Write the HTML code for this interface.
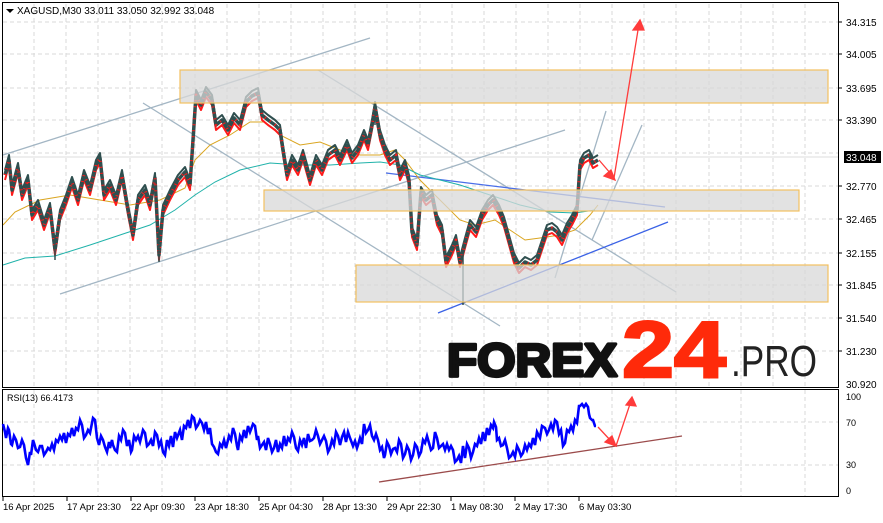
<!DOCTYPE html>
<html><head><meta charset="utf-8"><style>
html,body{margin:0;padding:0;background:#fff;}
body{width:883px;height:518px;overflow:hidden;font-family:"Liberation Sans",sans-serif;}
svg text{font-family:"Liberation Sans",sans-serif;}
</style></head><body>
<svg width="883" height="518" viewBox="0 0 883 518" xmlns="http://www.w3.org/2000/svg">
<defs>
<polyline id="pp" fill="none" stroke-linejoin="round" points="5,175 9,160 12,190 18,168 22,195 28,180 32,215 38,205 44,225 50,208 55,250 60,215 66,200 72,182 78,200 84,175 90,190 96,165 100,158 104,195 110,185 116,200 122,175 128,210 133,235 138,200 145,190 150,205 155,178 159,255 163,210 170,195 178,180 185,172 190,185 193,140 196,95 201,105 206,92 212,100 216,125 222,120 228,130 234,118 240,125 246,102 252,96 258,93 262,115 268,120 275,125 280,130 283,150 287,175 292,160 298,170 303,155 310,180 316,160 322,170 328,155 335,150 340,160 347,145 352,158 358,150 364,135 368,145 372,125 375,107 380,135 385,150 390,160 396,155 400,175 405,165 409,180 412,232 417,245 421,192 426,200 432,195 437,220 442,230 446,262 452,250 456,240 460,262 465,243 470,225 476,232 482,215 488,205 493,200 499,210 504,222 509,240 514,258 519,268 525,262 531,265 537,260 542,245 547,230 552,228 557,232 562,240 567,228 572,220 577,210 580,165 584,158 589,155 593,163 598,160"/>
</defs>
<rect width="883" height="518" fill="#fff"/>
<g stroke="#d8d8d8" stroke-dasharray="4 3" stroke-width="1">
<line x1="34" y1="4" x2="34" y2="386"/><line x1="66" y1="4" x2="66" y2="386"/><line x1="98" y1="4" x2="98" y2="386"/><line x1="130" y1="4" x2="130" y2="386"/><line x1="162" y1="4" x2="162" y2="386"/><line x1="195" y1="4" x2="195" y2="386"/><line x1="227" y1="4" x2="227" y2="386"/><line x1="259" y1="4" x2="259" y2="386"/><line x1="291" y1="4" x2="291" y2="386"/><line x1="323" y1="4" x2="323" y2="386"/><line x1="355" y1="4" x2="355" y2="386"/><line x1="387" y1="4" x2="387" y2="386"/><line x1="420" y1="4" x2="420" y2="386"/><line x1="452" y1="4" x2="452" y2="386"/><line x1="484" y1="4" x2="484" y2="386"/><line x1="516" y1="4" x2="516" y2="386"/><line x1="548" y1="4" x2="548" y2="386"/><line x1="580" y1="4" x2="580" y2="386"/><line x1="612" y1="4" x2="612" y2="386"/><line x1="644" y1="4" x2="644" y2="386"/><line x1="676" y1="4" x2="676" y2="386"/><line x1="709" y1="4" x2="709" y2="386"/><line x1="741" y1="4" x2="741" y2="386"/><line x1="773" y1="4" x2="773" y2="386"/><line x1="805" y1="4" x2="805" y2="386"/>
<line x1="3" y1="22" x2="838" y2="22"/><line x1="3" y1="54" x2="838" y2="54"/><line x1="3" y1="88" x2="838" y2="88"/><line x1="3" y1="120" x2="838" y2="120"/><line x1="3" y1="153" x2="838" y2="153"/><line x1="3" y1="186" x2="838" y2="186"/><line x1="3" y1="219" x2="838" y2="219"/><line x1="3" y1="253" x2="838" y2="253"/><line x1="3" y1="285" x2="838" y2="285"/><line x1="3" y1="318" x2="838" y2="318"/><line x1="3" y1="351" x2="838" y2="351"/>
</g>
<line x1="3" y1="157" x2="838" y2="157" stroke="#ddd"/>
<g stroke="#a3b6c4" stroke-width="1.3" fill="none">
<line x1="3" y1="155" x2="370" y2="38"/>
<line x1="60" y1="294" x2="565" y2="130"/>
<line x1="143" y1="103" x2="500" y2="326"/>
<line x1="318" y1="70" x2="676" y2="292"/>
<line x1="555" y1="278" x2="606" y2="111"/>
<line x1="592" y1="240" x2="642" y2="125"/>
</g>
<line x1="386" y1="173" x2="665" y2="207" stroke="#4a6ee8" stroke-width="1.3"/>
<line x1="438" y1="313" x2="668" y2="222" stroke="#3a62e6" stroke-width="1.3"/>
<polyline fill="none" stroke="#daa520" stroke-width="1" points="3,225 15,212 40,200 70,195 100,200 130,205 160,200 185,188 195,160 210,145 230,135 250,122 265,122 280,135 300,145 320,142 340,150 360,155 380,155 395,150 405,160 420,180 440,200 460,220 475,225 495,220 510,230 525,240 540,238 560,235 575,230 590,215 598,205"/>
<polyline fill="none" stroke="#20b2aa" stroke-width="1" points="3,265 25,258 55,256 90,245 120,235 150,225 175,210 195,195 215,182 240,170 270,163 300,165 330,165 360,163 380,162 400,165 420,175 440,180 460,185 490,195 520,205 550,212 575,213 595,210"/>
<!-- price candles approx -->
<use href="#pp" stroke="#2f4f4f" stroke-width="2" transform="translate(0,-5)"/>
<use href="#pp" stroke="#ff1a1a" stroke-width="2" transform="translate(0,5)"/>
<use href="#pp" stroke="#2f4f4f" stroke-width="3.5"/>
<use href="#pp" stroke="#ff1a1a" stroke-width="3" stroke-dasharray="1 5"/>
<g stroke="#2f4f4f" stroke-width="1.5">
<line x1="463" y1="255" x2="463" y2="305"/><line x1="159" y1="230" x2="159" y2="262"/><line x1="55" y1="235" x2="55" y2="260"/><line x1="375" y1="105" x2="375" y2="125"/>
</g>
<g fill="#d8d8d8" fill-opacity="0.75" stroke="#f2c060" stroke-width="1.2">
<rect x="180" y="70" width="648" height="33"/>
<rect x="264" y="190" width="535" height="21"/>
<rect x="356" y="265" width="472" height="37"/>
</g>
<g stroke="#ff3b3b" stroke-width="1.3" fill="#ff3b3b">
<line x1="599" y1="160" x2="611" y2="174"/><polygon points="615,180 604,176 611,170"/>
<line x1="614" y1="178" x2="638" y2="30"/><polygon points="640,20 633,30 644,30"/>
</g>
<text x="447" y="376" font-size="46" font-weight="900" fill="#111" stroke="#111" stroke-width="3.2" stroke-linejoin="round" textLength="170" lengthAdjust="spacingAndGlyphs">FOREX</text>
<text x="622" y="377" font-size="80" font-weight="bold" fill="#ff2a0a" stroke="#ff2a0a" stroke-width="2.5" textLength="104" lengthAdjust="spacingAndGlyphs">24</text>
<text x="731" y="376" font-size="44" fill="#222" textLength="86" lengthAdjust="spacingAndGlyphs">.PRO</text>
<polygon points="6,9 14,9 10,13" fill="#000"/>
<text x="17" y="14" font-size="10" fill="#000">XAGUSD,M30  33.011 33.050 32.992 33.048</text>
<rect x="2.5" y="2.5" width="836" height="385" fill="none" stroke="#000"/>
<rect x="2.5" y="389.5" width="836" height="107" fill="none" stroke="#000"/>
<g font-size="10" fill="#000">
<text x="846" y="26">34.315</text><text x="846" y="58">34.005</text><text x="846" y="92">33.695</text><text x="846" y="124">33.390</text><text x="846" y="190">32.770</text><text x="846" y="223">32.465</text><text x="846" y="257">32.155</text><text x="846" y="289">31.845</text><text x="846" y="322">31.540</text><text x="846" y="355">31.230</text><text x="846" y="388">30.920</text>
</g>
<g stroke="#000"><line x1="838" y1="22" x2="842" y2="22"/><line x1="838" y1="54" x2="842" y2="54"/><line x1="838" y1="88" x2="842" y2="88"/><line x1="838" y1="120" x2="842" y2="120"/><line x1="838" y1="186" x2="842" y2="186"/><line x1="838" y1="219" x2="842" y2="219"/><line x1="838" y1="253" x2="842" y2="253"/><line x1="838" y1="285" x2="842" y2="285"/><line x1="838" y1="318" x2="842" y2="318"/><line x1="838" y1="351" x2="842" y2="351"/></g>
<rect x="844" y="151" width="37" height="12" fill="#000"/>
<text x="846" y="161" font-size="10" fill="#fff">33.048</text>
<g stroke="#d8d8d8" stroke-dasharray="4 3">
<line x1="3" y1="422" x2="838" y2="422"/><line x1="3" y1="465" x2="838" y2="465"/>
<line x1="34" y1="390" x2="34" y2="496"/><line x1="98" y1="390" x2="98" y2="496"/><line x1="162" y1="390" x2="162" y2="496"/><line x1="227" y1="390" x2="227" y2="496"/><line x1="291" y1="390" x2="291" y2="496"/><line x1="355" y1="390" x2="355" y2="496"/><line x1="420" y1="390" x2="420" y2="496"/><line x1="484" y1="390" x2="484" y2="496"/><line x1="548" y1="390" x2="548" y2="496"/><line x1="612" y1="390" x2="612" y2="496"/><line x1="676" y1="390" x2="676" y2="496"/><line x1="741" y1="390" x2="741" y2="496"/><line x1="805" y1="390" x2="805" y2="496"/>
</g>
<text x="7" y="401" font-size="9" fill="#000">RSI(13) 66.4173</text>
<line x1="379" y1="482" x2="682" y2="436" stroke="#9b4b4b" stroke-width="1.3"/>
<polyline fill="none" stroke="#0000ff" stroke-width="2.6" stroke-linejoin="miter" points="3,424 5,432 6,438 8,428 9,430 11,444 12,445 14,436 16,440 18,448 20,447 22,440 24,445 26,458 28,465 30,452 31,455 33,440 34,443 36,450 38,452 40,446 42,446 44,455 46,452 48,448 50,450 52,444 54,450 56,440 58,442 60,436 62,440 64,433 66,443 68,434 70,436 72,428 74,436 76,428 78,430 80,420 82,425 84,438 86,435 88,430 90,433 93,418 95,420 97,438 99,445 101,436 103,440 105,447 107,452 109,442 110,448 112,440 113,445 115,450 117,452 119,436 121,440 123,430 125,433 127,446 129,440 131,452 132,450 134,436 136,440 138,436 140,442 143,430 145,433 147,446 149,444 151,440 153,446 155,432 157,435 159,446 161,441 163,452 165,455 167,440 169,446 171,436 173,447 175,432 177,438 180,430 182,440 184,426 186,428 188,420 190,428 192,416 194,418 196,428 198,425 200,420 202,423 204,430 206,422 208,434 210,428 212,444 214,447 216,452 218,454 220,444 222,447 224,440 226,448 229,436 231,440 233,428 235,434 237,446 238,450 240,436 242,440 244,430 246,438 248,426 250,432 253,424 255,426 257,440 258,436 260,448 262,445 264,442 266,450 268,438 270,444 272,452 274,448 276,440 278,452 280,444 282,448 284,436 286,446 288,438 290,441 292,432 294,437 296,448 298,451 300,440 302,445 304,438 306,448 308,434 310,441 312,440 314,438 316,430 318,436 320,444 322,440 324,436 326,441 328,452 330,448 332,440 334,445 336,432 338,436 340,445 342,437 344,432 346,442 348,432 350,438 353,446 355,441 357,448 358,445 360,438 362,444 364,424 366,433 368,430 370,425 372,436 374,440 376,434 378,440 380,450 382,447 384,458 385,455 387,442 389,446 391,454 393,449 395,448 397,452 399,440 401,444 403,458 405,454 407,446 409,450 411,460 413,455 415,444 417,447 419,456 421,452 423,440 425,443 427,436 429,443 431,450 433,448 435,432 437,438 439,448 441,446 443,444 445,450 447,444 449,450 451,446 453,450 455,462 457,460 459,456 461,463 463,446 465,458 467,444 469,448 471,458 473,452 475,444 477,446 479,438 481,444 483,432 485,441 487,428 489,435 491,425 493,428 494,422 496,427 497,440 499,438 501,446 503,445 505,440 507,448 509,458 511,456 513,452 515,457 517,446 519,450 521,456 523,453 525,445 527,450 529,444 531,447 533,438 535,445 537,432 540,438 542,426 545,428 547,434 549,430 551,424 553,430 555,420 557,422 559,434 561,430 563,446 565,443 567,430 569,432 571,426 573,431 575,420 577,423 579,406 580,406 582,404 584,407 586,404 588,407 589,414 590,418 592,420 593,420 595,426 596,426"/>
<g stroke="#ff3b3b" stroke-width="1.3" fill="#ff3b3b">
<line x1="598" y1="427" x2="611" y2="441"/><polygon points="616,446 605,442 612,436"/>
<line x1="616" y1="446" x2="630" y2="404"/><polygon points="632,397 626,405 636,406"/>
</g>
<g font-size="9" fill="#000">
<text x="846" y="400">100</text><text x="846" y="426">70</text><text x="846" y="468">30</text><text x="846" y="494">0</text>
</g>
<g stroke="#000"><line x1="3" y1="497" x2="3" y2="501"/><line x1="67" y1="497" x2="67" y2="501"/><line x1="131" y1="497" x2="131" y2="501"/><line x1="195" y1="497" x2="195" y2="501"/><line x1="259" y1="497" x2="259" y2="501"/><line x1="323" y1="497" x2="323" y2="501"/><line x1="387" y1="497" x2="387" y2="501"/><line x1="451" y1="497" x2="451" y2="501"/><line x1="515" y1="497" x2="515" y2="501"/><line x1="579" y1="497" x2="579" y2="501"/></g>
<g font-size="9.5" fill="#000">
<text x="3" y="510">16 Apr 2025</text><text x="67" y="510">17 Apr 23:30</text><text x="131" y="510">22 Apr 09:30</text><text x="195" y="510">23 Apr 18:30</text><text x="259" y="510">25 Apr 04:30</text><text x="323" y="510">28 Apr 13:30</text><text x="387" y="510">29 Apr 22:30</text><text x="451" y="510">1 May 08:30</text><text x="515" y="510">2 May 17:30</text><text x="579" y="510">6 May 03:30</text>
</g>
</svg>
</body></html>
